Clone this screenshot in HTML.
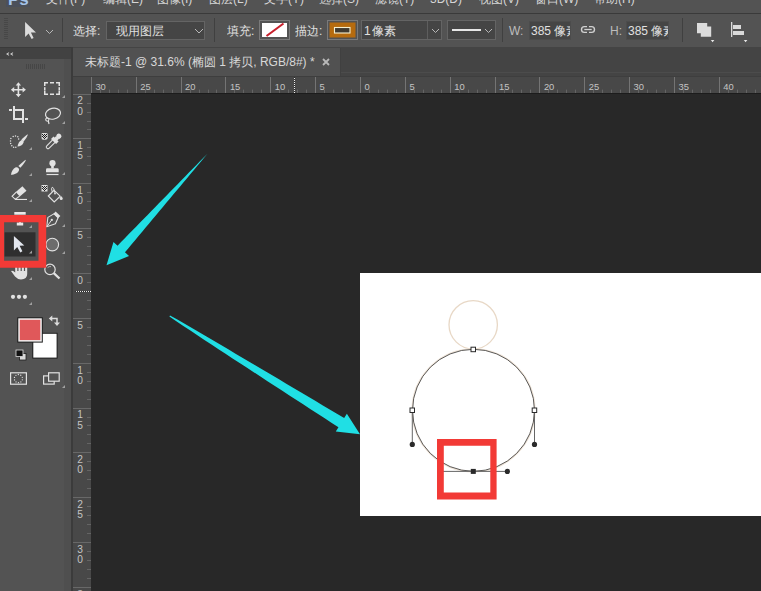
<!DOCTYPE html>
<html><head><meta charset="utf-8">
<style>
*{margin:0;padding:0;box-sizing:border-box}
html,body{width:761px;height:591px;overflow:hidden;background:#282828;font-family:"Liberation Sans",sans-serif;}
.a{position:absolute}
#menu{left:0;top:0;width:761px;height:13px;background:#535353;overflow:hidden}
#menu span{position:absolute;top:-7px;font-size:12px;color:#d6d6d6;white-space:nowrap;line-height:12px}
#mline{left:0;top:13px;width:761px;height:1px;background:#3a3a3a}
#opt{left:0;top:14px;width:761px;height:33px;background:#535353}
.t{position:absolute;white-space:nowrap;color:#e0e0e0;font-size:12px;line-height:14px}
.sep{position:absolute;width:1px;background:#404040;top:18px;height:24px}
.box{position:absolute;background:#454545;border:1px solid #646464}
#tools{left:0;top:47px;width:71px;height:544px;background:#535353}
#thead{left:0;top:47px;width:71px;height:12px;background:#424242;border-top:1px solid #3a3a3a}
#gap{left:71px;top:47px;width:2px;height:544px;background:#3b3b3b}
#tabbar{left:73px;top:47px;width:688px;height:29px;background:#444444}
#tab{left:73px;top:48px;width:267px;height:28px;background:#515151}
#hr{left:73px;top:76px;width:688px;height:17px;background:#484848}
#vr{left:73px;top:93px;width:18px;height:498px;background:#484848}
#doc{left:360px;top:273px;width:401px;height:243px;background:#fff}
i.c{display:inline-block;width:12px;font-style:normal;text-align:center;overflow:hidden;vertical-align:top}
svg text.rl{font-family:"Liberation Sans",sans-serif;font-size:9.4px;fill:#c4c4c4}
</style></head><body>
<div id="menu" class="a">
 <div style="position:absolute;left:6px;top:0;width:24px;height:7px;background:#4b505a"></div>
 <span style="left:8px;color:#a4c4ea;font-weight:bold;font-size:17px;top:-9px;line-height:17px">Ps</span>
 <span style="left:46px"><i class="c">文</i><i class="c">件</i>(F)</span>
 <span style="left:103px"><i class="c">编</i><i class="c">辑</i>(E)</span>
 <span style="left:157px"><i class="c">图</i><i class="c">像</i>(I)</span>
 <span style="left:209px"><i class="c">图</i><i class="c">层</i>(L)</span>
 <span style="left:264px"><i class="c">文</i><i class="c">字</i>(Y)</span>
 <span style="left:319px"><i class="c">选</i><i class="c">择</i>(S)</span>
 <span style="left:375px"><i class="c">滤</i><i class="c">镜</i>(T)</span>
 <span style="left:430px">3D(D)</span>
 <span style="left:479px"><i class="c">视</i><i class="c">图</i>(V)</span>
 <span style="left:535px"><i class="c">窗</i><i class="c">口</i>(W)</span>
 <span style="left:594px"><i class="c">帮</i><i class="c">助</i>(H)</span>
</div>
<div id="mline" class="a"></div>
<div id="opt" class="a"></div>
<div id="tools" class="a"></div>
<div id="thead" class="a"></div>
<div class="a" style="left:64px;top:59px;width:7px;height:532px;background:#4f4f4f"></div>
<div id="gap" class="a"></div>
<div id="tabbar" class="a"></div>
<div id="tab" class="a"></div>
<div id="hr" class="a"></div>
<div id="vr" class="a"></div>
<div id="doc" class="a"></div>

<!-- options bar content -->
<div class="t" style="left:73px;top:24px"><i class="c">选</i><i class="c">择</i>:</div>
<div class="box" style="left:106px;top:21px;width:99px;height:19px"></div>
<div class="t" style="left:116px;top:24px"><i class="c">现</i><i class="c">用</i><i class="c">图</i><i class="c">层</i></div>
<div class="sep" style="left:62px"></div>
<div class="sep" style="left:214px"></div>
<div class="t" style="left:227px;top:24px"><i class="c">填</i><i class="c">充</i>:</div>
<div class="t" style="left:295px;top:24px"><i class="c">描</i><i class="c">边</i>:</div>
<div class="box" style="left:361px;top:20px;width:81px;height:20px"></div>
<div class="a" style="left:427px;top:21px;width:1px;height:18px;background:#5e5e5e"></div>
<div class="t" style="left:364px;top:24px">1</div><div class="t" style="left:372px;top:24px"><i class="c">像</i><i class="c">素</i></div>
<div class="box" style="left:447px;top:20px;width:49px;height:20px"></div>
<div class="sep" style="left:502px"></div>
<div class="t" style="left:509px;top:24px;color:#bdbdbd">W:</div>
<div class="box" style="left:529px;top:21px;width:42px;height:19px;overflow:hidden;border-color:#4c4c4c"><div class="t" style="left:1px;top:2px">385 <i class="c">像</i><i class="c">素</i></div></div>
<div class="t" style="left:610px;top:24px;color:#bdbdbd">H:</div>
<div class="box" style="left:626px;top:21px;width:43px;height:19px;overflow:hidden;border-color:#4c4c4c"><div class="t" style="left:1px;top:2px">385 <i class="c">像</i><i class="c">素</i></div></div>
<div class="sep" style="left:682px"></div>

<!-- tab text -->
<div class="t" style="left:85px;top:55px;color:#d8d8d8"><i class="c">未</i><i class="c">标</i><i class="c">题</i>-1 @ 31.6% (<i class="c">椭</i><i class="c">圆</i> 1 <i class="c">拷</i><i class="c">贝</i>, RGB/8#) *</div>

<svg class="a" style="left:0;top:0" width="761" height="591" viewBox="0 0 761 591">
 <!-- options bar icons -->
 <g fill="#474747">
  <rect x="4" y="18" width="4" height="1"/><rect x="4" y="20" width="4" height="1"/><rect x="4" y="22" width="4" height="1"/><rect x="4" y="24" width="4" height="1"/><rect x="4" y="26" width="4" height="1"/><rect x="4" y="28" width="4" height="1"/><rect x="4" y="30" width="4" height="1"/><rect x="4" y="32" width="4" height="1"/><rect x="4" y="34" width="4" height="1"/><rect x="4" y="36" width="4" height="1"/><rect x="4" y="38" width="4" height="1"/>
 </g>
 <path d="M25.1,22 L25.1,37 L28.6,33.5 L31.6,39 L33.6,38 L30.9,32.5 L36,32.5 Z" fill="#dcdcdc"/>
 <path d="M46,30 L49.5,33.5 L53,30" fill="none" stroke="#b8b8b8" stroke-width="1"/>
 <path d="M195,29 L199,33 L203,29" fill="none" stroke="#b8b8b8" stroke-width="1"/>
 <path d="M432,29 L435.5,32.5 L439,29" fill="none" stroke="#b8b8b8" stroke-width="1"/>
 <path d="M485,29 L488.5,32.5 L492,29" fill="none" stroke="#b8b8b8" stroke-width="1"/>
 <rect x="452" y="29" width="29" height="2" fill="#e6e6e6"/>
 <!-- fill swatch -->
 <rect x="259.5" y="20.5" width="30" height="19" fill="none" stroke="#7a7a7a"/>
 <rect x="262" y="23" width="25" height="14" fill="#ffffff"/>
 <line x1="266.5" y1="36" x2="283.5" y2="23.5" stroke="#c8202c" stroke-width="2.1"/>
 <!-- stroke swatch -->
 <rect x="327.5" y="20.5" width="30" height="19" fill="none" stroke="#7a7a7a"/>
 <rect x="329.5" y="22.5" width="26" height="15" fill="#b66b0e"/>
 <rect x="334.5" y="27.5" width="15.5" height="5.5" fill="#403a30" stroke="#f6f0d0" stroke-width="1.1"/>
 <!-- link icon -->
 <g fill="none" stroke="#d0d0d0" stroke-width="1.4">
  <path d="M587,26.6 L584.4,26.6 A2.9,2.9 0 0 0 584.4,32.4 L587,32.4"/>
  <path d="M589,26.6 L591.6,26.6 A2.9,2.9 0 0 1 591.6,32.4 L589,32.4"/>
  <path d="M584.3,29.5 H591.7" stroke-width="1.3"/>
 </g>
 <!-- path ops -->
 <path d="M697,23 H707.2 V26.5 H711.2 V36.7 H700.8 V33.2 H697 Z" fill="#dcdcdc"/>
 <path d="M710.8,40 h3.6 l-1.8,2.3 z" fill="#e8e8e8"/>
 <rect x="731" y="22" width="1.3" height="15" fill="#dadada"/>
 <rect x="733" y="25" width="8" height="4" fill="#dadada"/>
 <rect x="733" y="31" width="11" height="4" fill="#dadada"/>
 <path d="M743.8,40 h3.6 l-1.8,2.3 z" fill="#e8e8e8"/>

 <!-- tab close -->
 <path d="M323,59 L329,65 M329,59 L323,65" stroke="#b8b8b8" stroke-width="1.8"/>

 <!-- panel header chevrons -->
 <path d="M9.3,52 L6,54 L9.3,56 L8.3,54 Z M13.3,52 L10,54 L13.3,56 L12.3,54 Z" fill="#d0d0d0"/>
 <g fill="#464646">
  <rect x="26" y="64" width="1" height="5"/><rect x="28" y="64" width="1" height="5"/><rect x="30" y="64" width="1" height="5"/><rect x="32" y="64" width="1" height="5"/><rect x="34" y="64" width="1" height="5"/><rect x="36" y="64" width="1" height="5"/><rect x="38" y="64" width="1" height="5"/><rect x="40" y="64" width="1" height="5"/><rect x="42" y="64" width="1" height="5"/><rect x="44" y="64" width="1" height="5"/>
 </g>

 <!-- rulers -->
 <rect x="73" y="76" width="688" height="1" fill="#3e3e3e"/>
 <rect x="341" y="72" width="420" height="1" fill="#4c4c4c"/>
 <rect x="340" y="48" width="1" height="28" fill="#404040"/>
 <rect x="91" y="93" width="670" height="1" fill="#1c1c1c"/>
 <rect x="91" y="77" width="1" height="16" fill="#747474"/>
<text x="95.4" y="90" class="rl">30</text>
<rect x="100" y="89.6" width="1" height="3.4" fill="#646464"/>
<rect x="109" y="89.6" width="1" height="3.4" fill="#646464"/>
<rect x="118" y="89.6" width="1" height="3.4" fill="#646464"/>
<rect x="127" y="89.6" width="1" height="3.4" fill="#646464"/>
<rect x="136" y="77" width="1" height="16" fill="#747474"/>
<text x="140.2" y="90" class="rl">25</text>
<rect x="145" y="89.6" width="1" height="3.4" fill="#646464"/>
<rect x="154" y="89.6" width="1" height="3.4" fill="#646464"/>
<rect x="163" y="89.6" width="1" height="3.4" fill="#646464"/>
<rect x="172" y="89.6" width="1" height="3.4" fill="#646464"/>
<rect x="181" y="77" width="1" height="16" fill="#747474"/>
<text x="185.1" y="90" class="rl">20</text>
<rect x="190" y="89.6" width="1" height="3.4" fill="#646464"/>
<rect x="199" y="89.6" width="1" height="3.4" fill="#646464"/>
<rect x="208" y="89.6" width="1" height="3.4" fill="#646464"/>
<rect x="216" y="89.6" width="1" height="3.4" fill="#646464"/>
<rect x="225" y="77" width="1" height="16" fill="#747474"/>
<text x="229.9" y="90" class="rl">15</text>
<rect x="234" y="89.6" width="1" height="3.4" fill="#646464"/>
<rect x="243" y="89.6" width="1" height="3.4" fill="#646464"/>
<rect x="252" y="89.6" width="1" height="3.4" fill="#646464"/>
<rect x="261" y="89.6" width="1" height="3.4" fill="#646464"/>
<rect x="270" y="77" width="1" height="16" fill="#747474"/>
<text x="274.8" y="90" class="rl">10</text>
<rect x="279" y="89.6" width="1" height="3.4" fill="#646464"/>
<rect x="288" y="89.6" width="1" height="3.4" fill="#646464"/>
<rect x="297" y="89.6" width="1" height="3.4" fill="#646464"/>
<rect x="306" y="89.6" width="1" height="3.4" fill="#646464"/>
<rect x="315" y="77" width="1" height="16" fill="#747474"/>
<text x="319.6" y="90" class="rl">5</text>
<rect x="324" y="89.6" width="1" height="3.4" fill="#646464"/>
<rect x="333" y="89.6" width="1" height="3.4" fill="#646464"/>
<rect x="342" y="89.6" width="1" height="3.4" fill="#646464"/>
<rect x="351" y="89.6" width="1" height="3.4" fill="#646464"/>
<rect x="360" y="77" width="1" height="16" fill="#747474"/>
<text x="364.5" y="90" class="rl">0</text>
<rect x="369" y="89.6" width="1" height="3.4" fill="#646464"/>
<rect x="378" y="89.6" width="1" height="3.4" fill="#646464"/>
<rect x="387" y="89.6" width="1" height="3.4" fill="#646464"/>
<rect x="396" y="89.6" width="1" height="3.4" fill="#646464"/>
<rect x="405" y="77" width="1" height="16" fill="#747474"/>
<text x="409.4" y="90" class="rl">5</text>
<rect x="414" y="89.6" width="1" height="3.4" fill="#646464"/>
<rect x="423" y="89.6" width="1" height="3.4" fill="#646464"/>
<rect x="432" y="89.6" width="1" height="3.4" fill="#646464"/>
<rect x="441" y="89.6" width="1" height="3.4" fill="#646464"/>
<rect x="450" y="77" width="1" height="16" fill="#747474"/>
<text x="454.2" y="90" class="rl">10</text>
<rect x="459" y="89.6" width="1" height="3.4" fill="#646464"/>
<rect x="468" y="89.6" width="1" height="3.4" fill="#646464"/>
<rect x="477" y="89.6" width="1" height="3.4" fill="#646464"/>
<rect x="486" y="89.6" width="1" height="3.4" fill="#646464"/>
<rect x="495" y="77" width="1" height="16" fill="#747474"/>
<text x="499.1" y="90" class="rl">15</text>
<rect x="504" y="89.6" width="1" height="3.4" fill="#646464"/>
<rect x="512" y="89.6" width="1" height="3.4" fill="#646464"/>
<rect x="521" y="89.6" width="1" height="3.4" fill="#646464"/>
<rect x="530" y="89.6" width="1" height="3.4" fill="#646464"/>
<rect x="539" y="77" width="1" height="16" fill="#747474"/>
<text x="543.9" y="90" class="rl">20</text>
<rect x="548" y="89.6" width="1" height="3.4" fill="#646464"/>
<rect x="557" y="89.6" width="1" height="3.4" fill="#646464"/>
<rect x="566" y="89.6" width="1" height="3.4" fill="#646464"/>
<rect x="575" y="89.6" width="1" height="3.4" fill="#646464"/>
<rect x="584" y="77" width="1" height="16" fill="#747474"/>
<text x="588.8" y="90" class="rl">25</text>
<rect x="593" y="89.6" width="1" height="3.4" fill="#646464"/>
<rect x="602" y="89.6" width="1" height="3.4" fill="#646464"/>
<rect x="611" y="89.6" width="1" height="3.4" fill="#646464"/>
<rect x="620" y="89.6" width="1" height="3.4" fill="#646464"/>
<rect x="629" y="77" width="1" height="16" fill="#747474"/>
<text x="633.6" y="90" class="rl">30</text>
<rect x="638" y="89.6" width="1" height="3.4" fill="#646464"/>
<rect x="647" y="89.6" width="1" height="3.4" fill="#646464"/>
<rect x="656" y="89.6" width="1" height="3.4" fill="#646464"/>
<rect x="665" y="89.6" width="1" height="3.4" fill="#646464"/>
<rect x="674" y="77" width="1" height="16" fill="#747474"/>
<text x="678.5" y="90" class="rl">35</text>
<rect x="683" y="89.6" width="1" height="3.4" fill="#646464"/>
<rect x="692" y="89.6" width="1" height="3.4" fill="#646464"/>
<rect x="701" y="89.6" width="1" height="3.4" fill="#646464"/>
<rect x="710" y="89.6" width="1" height="3.4" fill="#646464"/>
<rect x="719" y="77" width="1" height="16" fill="#747474"/>
<text x="723.3" y="90" class="rl">40</text>
<rect x="728" y="89.6" width="1" height="3.4" fill="#646464"/>
<rect x="737" y="89.6" width="1" height="3.4" fill="#646464"/>
<rect x="746" y="89.6" width="1" height="3.4" fill="#646464"/>
<rect x="755" y="89.6" width="1" height="3.4" fill="#646464"/>
<rect x="764" y="77" width="1" height="16" fill="#747474"/>
<text x="768.2" y="90" class="rl">45</text>
<rect x="73" y="94" width="18" height="1" fill="#686868"/>
<text x="77.3" y="104.4" class="rl" style="font-size:10.2px">2</text>
<text x="77.3" y="114.6" class="rl" style="font-size:10.2px">0</text>
<rect x="87" y="103" width="4" height="1" fill="#646464"/>
<rect x="87" y="112" width="4" height="1" fill="#646464"/>
<rect x="87" y="121" width="4" height="1" fill="#646464"/>
<rect x="87" y="129" width="4" height="1" fill="#646464"/>
<rect x="73" y="138" width="18" height="1" fill="#686868"/>
<text x="77.3" y="149.2" class="rl" style="font-size:10.2px">1</text>
<text x="77.3" y="159.4" class="rl" style="font-size:10.2px">5</text>
<rect x="87" y="147" width="4" height="1" fill="#646464"/>
<rect x="87" y="156" width="4" height="1" fill="#646464"/>
<rect x="87" y="165" width="4" height="1" fill="#646464"/>
<rect x="87" y="174" width="4" height="1" fill="#646464"/>
<rect x="73" y="183" width="18" height="1" fill="#686868"/>
<text x="77.3" y="194.1" class="rl" style="font-size:10.2px">1</text>
<text x="77.3" y="204.3" class="rl" style="font-size:10.2px">0</text>
<rect x="87" y="192" width="4" height="1" fill="#646464"/>
<rect x="87" y="201" width="4" height="1" fill="#646464"/>
<rect x="87" y="210" width="4" height="1" fill="#646464"/>
<rect x="87" y="219" width="4" height="1" fill="#646464"/>
<rect x="73" y="228" width="18" height="1" fill="#686868"/>
<text x="77.3" y="239.0" class="rl" style="font-size:10.2px">5</text>
<rect x="87" y="237" width="4" height="1" fill="#646464"/>
<rect x="87" y="246" width="4" height="1" fill="#646464"/>
<rect x="87" y="255" width="4" height="1" fill="#646464"/>
<rect x="87" y="264" width="4" height="1" fill="#646464"/>
<rect x="73" y="273" width="18" height="1" fill="#686868"/>
<text x="77.3" y="283.8" class="rl" style="font-size:10.2px">0</text>
<rect x="87" y="282" width="4" height="1" fill="#646464"/>
<rect x="87" y="291" width="4" height="1" fill="#646464"/>
<rect x="87" y="300" width="4" height="1" fill="#646464"/>
<rect x="87" y="309" width="4" height="1" fill="#646464"/>
<rect x="73" y="318" width="18" height="1" fill="#686868"/>
<text x="77.3" y="328.7" class="rl" style="font-size:10.2px">5</text>
<rect x="87" y="327" width="4" height="1" fill="#646464"/>
<rect x="87" y="336" width="4" height="1" fill="#646464"/>
<rect x="87" y="345" width="4" height="1" fill="#646464"/>
<rect x="87" y="354" width="4" height="1" fill="#646464"/>
<rect x="73" y="363" width="18" height="1" fill="#686868"/>
<text x="77.3" y="373.5" class="rl" style="font-size:10.2px">1</text>
<text x="77.3" y="383.7" class="rl" style="font-size:10.2px">0</text>
<rect x="87" y="372" width="4" height="1" fill="#646464"/>
<rect x="87" y="381" width="4" height="1" fill="#646464"/>
<rect x="87" y="390" width="4" height="1" fill="#646464"/>
<rect x="87" y="399" width="4" height="1" fill="#646464"/>
<rect x="73" y="408" width="18" height="1" fill="#686868"/>
<text x="77.3" y="418.4" class="rl" style="font-size:10.2px">1</text>
<text x="77.3" y="428.6" class="rl" style="font-size:10.2px">5</text>
<rect x="87" y="417" width="4" height="1" fill="#646464"/>
<rect x="87" y="425" width="4" height="1" fill="#646464"/>
<rect x="87" y="434" width="4" height="1" fill="#646464"/>
<rect x="87" y="443" width="4" height="1" fill="#646464"/>
<rect x="73" y="452" width="18" height="1" fill="#686868"/>
<text x="77.3" y="463.2" class="rl" style="font-size:10.2px">2</text>
<text x="77.3" y="473.4" class="rl" style="font-size:10.2px">0</text>
<rect x="87" y="461" width="4" height="1" fill="#646464"/>
<rect x="87" y="470" width="4" height="1" fill="#646464"/>
<rect x="87" y="479" width="4" height="1" fill="#646464"/>
<rect x="87" y="488" width="4" height="1" fill="#646464"/>
<rect x="73" y="497" width="18" height="1" fill="#686868"/>
<text x="77.3" y="508.1" class="rl" style="font-size:10.2px">2</text>
<text x="77.3" y="518.2" class="rl" style="font-size:10.2px">5</text>
<rect x="87" y="506" width="4" height="1" fill="#646464"/>
<rect x="87" y="515" width="4" height="1" fill="#646464"/>
<rect x="87" y="524" width="4" height="1" fill="#646464"/>
<rect x="87" y="533" width="4" height="1" fill="#646464"/>
<rect x="73" y="542" width="18" height="1" fill="#686868"/>
<text x="77.3" y="552.9" class="rl" style="font-size:10.2px">3</text>
<text x="77.3" y="563.1" class="rl" style="font-size:10.2px">0</text>
<rect x="87" y="551" width="4" height="1" fill="#646464"/>
<rect x="87" y="560" width="4" height="1" fill="#646464"/>
<rect x="87" y="569" width="4" height="1" fill="#646464"/>
<rect x="87" y="578" width="4" height="1" fill="#646464"/>
<rect x="73" y="587" width="18" height="1" fill="#686868"/>
<text x="77.3" y="597.8" class="rl" style="font-size:10.2px">3</text>
<text x="77.3" y="608.0" class="rl" style="font-size:10.2px">5</text>
<rect x="87" y="596" width="4" height="1" fill="#646464"/>
 <rect x="294" y="77" width="1" height="16" fill="#ffffff" opacity="0.9" style="stroke-dasharray:1 1"/>
 <line x1="294.5" y1="77" x2="294.5" y2="93" stroke="#2a2a2a" stroke-width="1" stroke-dasharray="1 1"/>
 <rect x="75" y="291" width="16" height="1" fill="#ffffff" opacity="0.9"/>
 <line x1="75" y1="291.5" x2="91" y2="291.5" stroke="#2a2a2a" stroke-width="1" stroke-dasharray="1 1"/>

 <!-- TOOLS -->
 <g fill="#e2e2e2" stroke="none">
  <!-- move -->
  <path d="M17.60,85.60 L15.70,85.60 L18.40,82.30 L21.10,85.60 L19.20,85.60 L19.20,89.00 L22.60,89.00 L22.60,87.10 L25.90,89.80 L22.60,92.50 L22.60,90.60 L19.20,90.60 L19.20,94.00 L21.10,94.00 L18.40,97.30 L15.70,94.00 L17.60,94.00 L17.60,90.60 L14.20,90.60 L14.20,92.50 L10.90,89.80 L14.20,87.10 L14.20,89.00 L17.60,89.00 Z"/>
  <!-- crop -->
  <rect x="13" y="106" width="2" height="14"/><rect x="13" y="118" width="9.5" height="2"/><rect x="25" y="118" width="3" height="2"/>
  <rect x="15" y="109" width="9" height="2"/><rect x="22" y="109" width="2" height="14"/><rect x="9" y="109" width="3" height="2"/>
  <!-- small triangles -->
  <path d="M65,95 L65,98 L62,98 Z" fill="#a0a0a0"/>
  <path d="M65,121 L65,124 L62,124 Z" fill="#a0a0a0"/>
  <path d="M32,147 L32,150 L29,150 Z" fill="#a0a0a0"/>
  <path d="M32,173 L32,176 L29,176 Z" fill="#a0a0a0"/>
  <path d="M65,172 L65,175 L62,175 Z" fill="#a0a0a0"/>
  <path d="M32,199 L32,202 L29,202 Z" fill="#a0a0a0"/>
  <path d="M32,225 L32,228 L29,228 Z" fill="#a0a0a0"/>
  <path d="M65,224 L65,227 L62,227 Z" fill="#a0a0a0"/>
  <path d="M32,250 L32,253 L29,253 Z" fill="#a0a0a0"/>
  <path d="M65,251 L65,254 L62,254 Z" fill="#a0a0a0"/>
  <path d="M32,277 L32,280 L29,280 Z" fill="#a0a0a0"/>
  <path d="M32,302 L32,305 L29,305 Z" fill="#a0a0a0"/>
  <path d="M65,385 L65,388 L62,388 Z" fill="#a0a0a0"/>
 </g>
 <!-- marquee -->
 <g fill="#e2e2e2">
  <path d="M44,82 H48 V83.5 H45.5 V86 H44 Z"/><path d="M60,82 H56 V83.5 H58.5 V86 H60 Z"/>
  <path d="M44,95 H48 V93.5 H45.5 V91 H44 Z"/><path d="M60,95 H56 V93.5 H58.5 V91 H60 Z"/>
  <rect x="50" y="82" width="4" height="1.5"/><rect x="50" y="93.5" width="4" height="1.5"/>
  <rect x="44" y="87.2" width="1.5" height="3.4"/><rect x="58.5" y="87.2" width="1.5" height="3.4"/>
 </g>
 <!-- lasso -->
 <ellipse cx="53" cy="113.7" rx="7.6" ry="5.4" transform="rotate(-12 53 113.7)" fill="none" stroke="#e2e2e2" stroke-width="1.2"/>
 <circle cx="47.3" cy="119.6" r="1.6" fill="none" stroke="#e2e2e2" stroke-width="1.1"/>
 <path d="M48.3,120.8 L49,124" fill="none" stroke="#e2e2e2" stroke-width="1.2"/>
 <!-- quick selection -->
 <g fill="#e2e2e2">
  <circle cx="13.2" cy="136.4" r="0.75"/><circle cx="15.5" cy="136" r="0.75"/><circle cx="17.8" cy="136.8" r="0.75"/><circle cx="18.6" cy="139" r="0.75"/>
  <circle cx="10.9" cy="138.5" r="0.75"/><circle cx="10.5" cy="141" r="0.75"/><circle cx="10.7" cy="143.6" r="0.75"/><circle cx="11.8" cy="145.8" r="0.75"/><circle cx="13.6" cy="147.2" r="0.75"/><circle cx="15.8" cy="147.3" r="0.75"/>
  <path d="M27.9,134.3 Q27.6,136.5 23.6,141.6 L21.4,139.6 Q25.5,135.5 27.9,134.3 Z"/>
  <path d="M17.4,146.6 C18.2,143.5 19.2,141 21.3,140.2 C22.8,139.8 24,141 23.6,142.6 C22.8,145.2 20,146.4 17.4,146.6 Z"/>
 </g>
 <!-- eyedropper -->
 <g>
  <path d="M41.5,134 Q41.5,133 42.5,133 L46.5,133 Q47.7,133 47.7,134.5 L47.7,138 Q47.7,139.8 45.5,139.8 L43,139.8 Q41.5,139.8 41.5,138 Z" fill="#d8d8d8"/>
  <g fill="#1c1c1c"><rect x="42" y="134" width="1" height="1"/><rect x="44" y="134" width="1" height="1"/><rect x="46" y="134" width="1" height="1"/><rect x="43" y="135" width="1" height="1"/><rect x="45" y="135" width="1" height="1"/><rect x="42" y="136" width="1" height="1"/><rect x="44" y="136" width="1" height="1"/><rect x="46" y="136" width="1" height="1"/><rect x="43" y="137" width="1" height="1"/><rect x="45" y="137" width="1" height="1"/><rect x="44" y="138" width="1" height="1"/></g>
  <g transform="translate(46.8,148.2) rotate(-45)">
   <path d="M10,-1.7 L1.7,-1.7 Q0,-1.7 0,0 Q0,1.7 1.7,1.7 L10,1.7" fill="none" stroke="#e2e2e2" stroke-width="1.1"/>
   <rect x="9.5" y="-3.6" width="3.6" height="7.2" fill="#e2e2e2"/>
   <rect x="12.5" y="-2" width="2.5" height="4" fill="#e2e2e2"/>
   <rect x="14.5" y="-2.6" width="5" height="5.2" rx="2.4" fill="#e2e2e2"/>
  </g>
 </g>
 <!-- brush -->
 <g fill="#e2e2e2">
  <path d="M26,159.8 Q25.6,162 20.4,167.8 L18.4,166 Q23.5,161 26,159.8 Z"/>
  <path d="M10.9,174.8 C11.6,171.5 13,168.3 15.8,167.3 C17.8,166.8 19.4,168.3 19,170.2 C18.2,173.2 14.5,174.6 10.9,174.8 Z"/>
 </g>
 <!-- stamp -->
 <g fill="#e2e2e2">
  <circle cx="52.5" cy="163.2" r="3.1"/>
  <rect x="51.2" y="165" width="2.6" height="3.5"/>
  <path d="M46,172.3 L46,169.5 Q46,168.3 47.3,168.3 L57.4,168.3 Q58.7,168.3 58.7,169.5 L58.7,172.3 Z"/>
  <rect x="46.5" y="173.9" width="12" height="1.2"/>
 </g>
 <!-- eraser -->
 <g>
  <path d="M22.4,186.2 L26.5,190.8 L19.8,196.4 L15.8,191.9 Z" fill="#e2e2e2"/>
  <path d="M16.2,192.2 L12.1,196.3 L15.3,199.3 L19.6,196.1" fill="none" stroke="#e2e2e2" stroke-width="1.1"/>
  <rect x="15" y="198.9" width="12" height="1.1" fill="#e2e2e2"/>
 </g>
 <!-- bucket -->
 <g>
  <rect x="41.5" y="185" width="6" height="6.5" fill="#dcdcdc"/>
  <g fill="#222"><rect x="42" y="186" width="1" height="1"/><rect x="44" y="186" width="1" height="1"/><rect x="46" y="186" width="1" height="1"/><rect x="43" y="187" width="1" height="1"/><rect x="45" y="187" width="1" height="1"/><rect x="42" y="188" width="1" height="1"/><rect x="44" y="188" width="1" height="1"/><rect x="46" y="188" width="1" height="1"/><rect x="43" y="189" width="1" height="1"/><rect x="45" y="189" width="1" height="1"/><rect x="44" y="190" width="1" height="1"/></g>
  <path d="M48.3,196 L54,190.3 L60.2,196.2 L54.2,202 Z" fill="none" stroke="#e2e2e2" stroke-width="1.1"/>
  <path d="M52.3,192 Q50.8,188 52.2,187.3 Q53.8,187 55,193.3" fill="none" stroke="#e2e2e2" stroke-width="1"/><circle cx="55" cy="193.6" r="0.9" fill="#e2e2e2"/>
  <circle cx="61.2" cy="198.6" r="1.5" fill="#e2e2e2"/><path d="M60,198 L61.2,196 L62.4,198 Z" fill="#e2e2e2"/>
 </g>
 <!-- type T -->
 <rect x="14.3" y="212" width="11.4" height="2.7" fill="#e8e8e8"/>
 <!-- pen -->
 <path d="M46.7,226.8 L47.9,217.4 L54.3,213.6 L58.2,217.6 L55.4,223.8 Z" fill="none" stroke="#e2e2e2" stroke-width="1.1" stroke-linejoin="round"/>
 <path d="M53.4,213.9 L55.6,211.4 L60.4,216.1 L57.9,218.3 Z" fill="#e2e2e2"/>
 <path d="M46.9,226.6 L51.4,220.4" stroke="#e2e2e2" stroke-width="1"/>
 <circle cx="51.8" cy="219.9" r="1.15" fill="#e2e2e2"/>
 <!-- ellipse -->
 <ellipse cx="52.3" cy="244.6" rx="6.3" ry="6.3" fill="#6c6c6c" stroke="#e2e2e2" stroke-width="1.1"/>
 <!-- zoom -->
 <circle cx="50" cy="269.4" r="5.2" fill="none" stroke="#e2e2e2" stroke-width="1.2"/>
 <path d="M53.8,273.2 L59.5,278.5" stroke="#e2e2e2" stroke-width="2.3"/>
 <path d="M47.6,267.6 Q49,266.2 51,266.6" fill="none" stroke="#bdbdbd" stroke-width="0.9"/>
 <!-- hand -->
 <path d="M11,271 Q13,270 15.2,272.5 L15.2,266 L27.2,266 L27.2,274 Q27.2,279.4 21,279.4 Q17.5,279.4 15,276.5 Z" fill="#e2e2e2"/>
 <g fill="#535353"><rect x="17.3" y="266" width="1.2" height="5"/><rect x="20.6" y="266" width="1.2" height="5"/><rect x="23.9" y="266" width="1.2" height="5"/></g>
 <!-- dots -->
 <circle cx="13" cy="296.8" r="2.1" fill="#e2e2e2"/><circle cx="19" cy="296.8" r="2.1" fill="#e2e2e2"/><circle cx="24.9" cy="296.8" r="2.1" fill="#e2e2e2"/>
 <!-- colors -->
 <rect x="32.3" y="332.8" width="25.3" height="25.8" fill="#1e1e1e"/>
 <rect x="33.3" y="333.8" width="23.3" height="23.8" fill="#ffffff"/>
 <rect x="17.3" y="317.3" width="25.5" height="25.3" fill="#1e1e1e"/>
 <rect x="18.3" y="318.3" width="23.5" height="23.3" fill="#f2f2f2"/>
 <rect x="19.8" y="319.8" width="20.5" height="20.3" fill="#e0585a"/>
 <g fill="none" stroke="#dcdcdc" stroke-width="1.5">
  <path d="M51.5,318.5 L57,318.5 L57,323.5"/>
 </g>
 <path d="M48.8,318.5 L52.3,315.6 L52.3,321.4 Z M54,322.6 L60,322.6 L57,326 Z" fill="#dcdcdc"/>
 <rect x="19.5" y="353.5" width="6.5" height="6.5" fill="#d8d8d8" stroke="#1e1e1e" stroke-width="0.8"/>
 <rect x="16" y="350" width="7" height="6.5" fill="#111" stroke="#dcdcdc" stroke-width="0.8"/>
 <!-- quick mask -->
 <rect x="10.6" y="372.8" width="15.8" height="11.4" fill="none" stroke="#e2e2e2" stroke-width="1.2"/>
 <g fill="#e2e2e2"><circle cx="22.32" cy="379.81" r="0.65"/><circle cx="20.86" cy="381.88" r="0.65"/><circle cx="18.46" cy="382.70" r="0.65"/><circle cx="16.04" cy="381.95" r="0.65"/><circle cx="14.52" cy="379.92" r="0.65"/><circle cx="14.48" cy="377.39" r="0.65"/><circle cx="15.94" cy="375.32" r="0.65"/><circle cx="18.34" cy="374.50" r="0.65"/><circle cx="20.76" cy="375.25" r="0.65"/><circle cx="22.28" cy="377.28" r="0.65"/></g>
 <!-- screen mode -->
 <rect x="43.6" y="375.9" width="10.6" height="8.2" fill="none" stroke="#e2e2e2" stroke-width="1.2"/>
 <rect x="48.6" y="372.8" width="10.6" height="8.4" fill="#535353" stroke="#e2e2e2" stroke-width="1.2"/>

 <!-- red box tools -->
 <rect x="4.5" y="232.3" width="31" height="24.2" fill="#2f2f2f"/>
 <path d="M13.9,236 L13.9,250.4 L17.2,246.9 L20.3,252.4 L22.4,251.3 L19.6,245.7 L24.3,245.4 Z" fill="#e2e6ee"/>
 <path d="M32,250.5 L32,253.5 L29,253.5 Z" fill="#a0a0a0"/>
 <rect x="16.8" y="222.5" width="6.4" height="3" fill="#e8e8e8"/>
 <rect x="19" y="219" width="2" height="5" fill="#e8e8e8"/>
 <path d="M0,215 H46.2 V267.8 H0 Z M4.1,222.2 V260.7 H38.5 V222.2 Z" fill="#f23a36" fill-rule="evenodd"/>

 <!-- document shapes -->
 <circle cx="473.2" cy="324.8" r="24.2" fill="none" stroke="#e8d8c6" stroke-width="1.3"/>
 <circle cx="473.5" cy="410.3" r="61.3" fill="none" stroke="#efe4d8" stroke-width="1.6"/>
 <circle cx="473.5" cy="410.3" r="61" fill="none" stroke="#404040" stroke-width="0.85"/>
 <g stroke="#666" stroke-width="1" fill="none">
  <line x1="412.3" y1="410.3" x2="412.3" y2="444.4"/>
  <line x1="534.5" y1="410.3" x2="534.5" y2="444.4"/>
  <line x1="439" y1="471.4" x2="507.4" y2="471.4"/>
 </g>
 <g fill="#2a2a2a">
  <circle cx="412.3" cy="444.4" r="2.6"/>
  <circle cx="534.5" cy="444.4" r="2.6"/>
  <circle cx="507.4" cy="471.4" r="2.6"/>
  <rect x="470.8" y="468.9" width="5" height="5"/>
 </g>
 <g fill="#fff" stroke="#2a2a2a" stroke-width="1">
  <rect x="471" y="347.2" width="4.5" height="4.5"/>
  <rect x="410" y="408" width="4.5" height="4.5"/>
  <rect x="532.2" y="408" width="4.5" height="4.5"/>
 </g>
 <path d="M437,439 H496.6 V499.5 H437 Z M443.8,445.7 V492.6 H490.3 V445.7 Z" fill="#f23a36" fill-rule="evenodd"/>

 <!-- arrows -->
 <polygon fill="#20dfe4" points="207.70,153.40 203.94,157.24 200.19,161.09 196.43,164.93 192.67,168.77 188.92,172.61 185.16,176.46 181.41,180.30 177.65,184.14 173.89,187.99 170.14,191.83 166.38,195.67 162.62,199.51 158.87,203.36 155.11,207.20 151.36,211.04 147.60,214.89 143.84,218.73 140.09,222.57 136.33,226.41 132.57,230.26 128.82,234.10 125.06,237.94 121.30,241.79 117.55,245.63 113.47,241.94 106.50,265.30 129.04,256.03 124.97,252.34 128.41,248.21 131.86,244.09 135.31,239.97 138.75,235.85 142.20,231.73 145.65,227.60 149.10,223.48 152.54,219.36 155.99,215.24 159.44,211.11 162.89,206.99 166.33,202.87 169.78,198.75 173.23,194.62 176.67,190.50 180.12,186.38 183.57,182.26 187.02,178.13 190.46,174.01 193.91,169.89 197.36,165.77 200.81,161.64 204.25,157.52 207.70,153.40"/>
 <polygon fill="#20dfe4" points="169.38,316.51 176.33,321.28 183.34,325.96 190.36,330.62 197.38,335.26 204.41,339.90 211.45,344.53 218.49,349.15 225.54,353.76 232.58,358.38 239.63,362.99 246.68,367.59 253.74,372.19 260.79,376.79 267.85,381.39 274.90,385.99 281.96,390.58 289.02,395.17 296.08,399.76 303.14,404.35 310.21,408.94 317.27,413.52 324.33,418.11 331.40,422.69 338.47,427.27 335.77,431.60 360.00,434.30 346.86,413.77 344.17,418.10 336.93,413.79 329.70,409.48 322.46,405.18 315.22,400.87 307.98,396.57 300.74,392.27 293.50,387.97 286.26,383.67 279.02,379.37 271.77,375.07 264.53,370.78 257.28,366.49 250.03,362.20 242.78,357.92 235.53,353.64 228.27,349.36 221.02,345.09 213.76,340.82 206.49,336.55 199.22,332.30 191.95,328.05 184.67,323.82 177.37,319.61 170.02,315.49"/>
</svg>
</body></html>
